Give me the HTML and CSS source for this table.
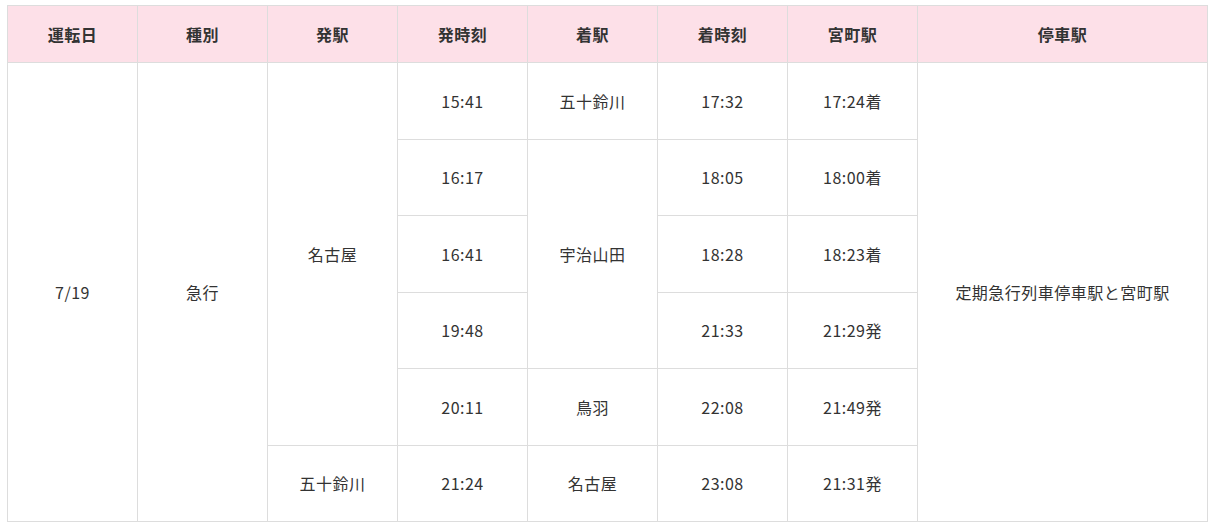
FILE: index.html
```html
<!DOCTYPE html>
<html lang="ja">
<head>
<meta charset="utf-8">
<link rel="stylesheet" href="styles.css">
</head>
<body>
<table class="timetable">
  <colgroup>
    <col class="c"><col class="c"><col class="c"><col class="c"><col class="c"><col class="c"><col class="c"><col class="c-wide">
  </colgroup>
  <thead>
    <tr class="head">
      <th>運転日</th><th>種別</th><th>発駅</th><th>発時刻</th><th>着駅</th><th>着時刻</th><th>宮町駅</th><th>停車駅</th>
    </tr>
  </thead>
  <tbody>
    <tr class="r">
      <td rowspan="6">7/19</td>
      <td rowspan="6">急行</td>
      <td rowspan="5">名古屋</td>
      <td>15:41</td>
      <td>五十鈴川</td>
      <td>17:32</td>
      <td>17:24着</td>
      <td rowspan="6">定期急行列車停車駅と宮町駅</td>
    </tr>
    <tr class="r">
      <td>16:17</td>
      <td rowspan="3">宇治山田</td>
      <td>18:05</td>
      <td>18:00着</td>
    </tr>
    <tr class="r">
      <td>16:41</td>
      <td>18:28</td>
      <td>18:23着</td>
    </tr>
    <tr class="r">
      <td>19:48</td>
      <td>21:33</td>
      <td>21:29発</td>
    </tr>
    <tr class="r">
      <td>20:11</td>
      <td>鳥羽</td>
      <td>22:08</td>
      <td>21:49発</td>
    </tr>
    <tr class="r">
      <td>五十鈴川</td>
      <td>21:24</td>
      <td>名古屋</td>
      <td>23:08</td>
      <td>21:31発</td>
    </tr>
  </tbody>
</table>
</body>
</html>
```

FILE: styles.css
```css
html, body {
  margin: 0;
  padding: 0;
  background: #ffffff;
}
body {
  padding: 5px 7px;
  font-family: "Noto Sans CJK JP", "Noto Sans", sans-serif;
  color: #333333;
  font-size: 16px;
}
.timetable {
  width: 1200px;
  border-collapse: collapse;
  table-layout: fixed;
}
.c { width: 130px; }
.c-wide { width: 290px; }
.timetable th,
.timetable td {
  border: 1px solid #dddddd;
  text-align: center;
  vertical-align: middle;
  padding: 0;
  line-height: 1.5;
  letter-spacing: 0.03em;
}
.timetable th {
  background: #fde0e8;
  font-weight: 700;
  height: 56px;
}
.timetable .r td {
  height: 75.5px;
}
```
